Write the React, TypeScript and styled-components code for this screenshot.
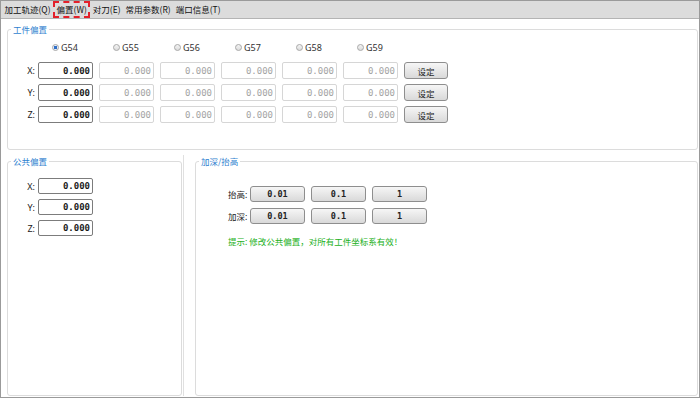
import React from 'react';
import styled, { createGlobalStyle } from 'styled-components';

const Global = createGlobalStyle`
  html, body { margin: 0; padding: 0; background: #fff; }
  body { font-family: "Noto Sans CJK SC", "Noto Sans", sans-serif; }
  * { box-sizing: border-box; }
`;

const Window = styled.div`
  width: 700px;
  height: 398px;
  border: 1px solid #9a9a9a;
  display: flex;
  flex-direction: column;
  background: #fff;
  overflow: hidden;
`;

const MenuBar = styled.div`
  height: 18px;
  flex: none;
  background: #dcdcdc;
  border-bottom: 1px solid #b4b4b4;
  display: flex;
  align-items: stretch;
  padding-left: 1px;
`;

const MenuItem = styled.div<{ $active?: boolean }>`
  display: flex;
  align-items: center;
  padding: 0 2.5px;
  font-size: 8.5px;
  color: #111;
  line-height: 1;
  white-space: nowrap;
  ${(p) => (p.$active ? 'outline: 2px dashed #e3202a; outline-offset: -2px; padding: 0 3.5px;' : '')}
`;

const Content = styled.div`
  flex: 1;
  display: flex;
  flex-direction: column;
  padding: 4px 1px 1px 6px;
  min-height: 0;
`;

const Group = styled.fieldset<{ $grow?: boolean }>`
  margin: 0;
  padding: 0;
  border: 1px solid #dcdcdc;
  border-radius: 3px;
  min-width: 0;
  ${(p) => (p.$grow ? 'flex: 1;' : '')}
`;

const Legend = styled.legend`
  margin-left: 3px;
  padding: 0 2px;
  font-size: 8.5px;
  color: #2f7fcf;
  line-height: 12px;
`;

const TopBody = styled.div`
  padding: 6px 0 26px 0;
  display: flex;
  flex-direction: column;
  gap: 5px;
`;

const RadioRow = styled.div`
  display: flex;
  padding-left: 44px;
  height: 12px;
  margin-bottom: 4px;
`;

const RadioItem = styled.div`
  width: 61px;
  display: flex;
  align-items: center;
  gap: 2px;
  font-family: "Noto Sans", sans-serif;
  font-size: 9px;
  color: #333;
`;

const RadioDot = styled.span<{ $checked?: boolean }>`
  width: 7px;
  height: 7px;
  border-radius: 50%;
  border: 1px solid #a8a8a8;
  background: ${(p) =>
    p.$checked
      ? 'radial-gradient(circle, #2f6fc8 0 1.6px, #e8eef8 2px)'
      : 'linear-gradient(#f4f4f4, #dcdcdc)'};
`;

const Row = styled.div<{ $h?: number }>`
  display: flex;
  align-items: center;
  height: ${(p) => p.$h ?? 17}px;
`;

const AxisLabel = styled.div<{ $w?: number }>`
  width: ${(p) => p.$w ?? 30}px;
  flex: none;
  text-align: right;
  padding-right: 3px;
  font-family: "Noto Sans", "Noto Sans CJK SC", sans-serif;
  font-size: 9px;
  color: #222;
`;

const Cells = styled.div`
  display: flex;
  gap: 6px;
  height: 100%;
`;

const NumBox = styled.div<{ $disabled?: boolean }>`
  width: 55px;
  height: 100%;
  border: 1px solid ${(p) => (p.$disabled ? '#d6d6d6' : '#7c7c7c')};
  border-radius: 2px;
  background: #fff;
  display: flex;
  align-items: center;
  justify-content: flex-end;
  padding-right: 2px;
  font-family: "DejaVu Sans Mono", monospace;
  font-size: 9px;
  color: ${(p) => (p.$disabled ? '#a4a4a4' : '#1a1a1a')};
  font-weight: ${(p) => (p.$disabled ? 400 : 600)};
`;

const Btn = styled.div<{ $w?: number }>`
  width: ${(p) => p.$w ?? 55}px;
  height: 100%;
  border: 1px solid #8e8e8e;
  border-radius: 3px;
  background: linear-gradient(#f6f6f6, #d9d9d9);
  display: flex;
  align-items: center;
  justify-content: center;
  font-family: "DejaVu Sans Mono", "Noto Sans CJK SC", monospace;
  font-size: 8.5px;
  font-weight: 600;
  color: #222;
`;

const SetBtn = styled(Btn)`
  margin-left: 6px;
  font-family: "Noto Sans CJK SC", sans-serif;
  font-weight: 400;
`;

const BottomRow = styled.div`
  flex: 1;
  display: flex;
  margin-top: 5px;
  min-height: 0;
`;

const LeftPane = styled.div`
  width: 175px;
  flex: none;
  display: flex;
  flex-direction: column;
`;

const Splitter = styled.div`
  width: 1px;
  flex: none;
  background: #e0e0e0;
  margin: 0 11px 0 1px;
`;

const RightPane = styled.div`
  flex: 1;
  display: flex;
  flex-direction: column;
  min-width: 0;
`;

const LeftBody = styled.div`
  padding-top: 11px;
  display: flex;
  flex-direction: column;
  gap: 5px;
`;

const RightBody = styled.div`
  padding: 19px 0 0 32px;
  display: flex;
  flex-direction: column;
  gap: 6px;
`;

const HintText = styled.div`
  margin-top: 5px;
  font-size: 8.5px;
  line-height: 12px;
  color: #22b022;
`;

const RowLabel = styled.div`
  width: 22px;
  flex: none;
  font-size: 8.5px;
  color: #222;
`;

const gCodes = ['G54', 'G55', 'G56', 'G57', 'G58', 'G59'];
const axes = ['X', 'Y', 'Z'];
const menus = ['加工轨迹(Q)', '偏置(W)', '对刀(E)', '常用参数(R)', '端口信息(T)'];

export default function App() {
  return (
    <>
      <Global />
      <Window>
        <MenuBar>
          {menus.map((m, i) => (
            <MenuItem key={m} $active={i === 1}>
              {m}
            </MenuItem>
          ))}
        </MenuBar>
        <Content>
          <Group>
            <Legend>工件偏置</Legend>
            <TopBody>
              <RadioRow>
                {gCodes.map((g, i) => (
                  <RadioItem key={g}>
                    <RadioDot $checked={i === 0} />
                    {g}
                  </RadioItem>
                ))}
              </RadioRow>
              {axes.map((a) => (
                <Row key={a}>
                  <AxisLabel>{a}:</AxisLabel>
                  <Cells>
                    {gCodes.map((g, i) => (
                      <NumBox key={g} $disabled={i > 0}>
                        0.000
                      </NumBox>
                    ))}
                  </Cells>
                  <SetBtn $w={44}>设定</SetBtn>
                </Row>
              ))}
            </TopBody>
          </Group>
          <BottomRow>
            <LeftPane>
              <Group $grow>
                <Legend>公共偏置</Legend>
                <LeftBody>
                  {axes.map((a) => (
                    <Row key={a} $h={16}>
                      <AxisLabel>{a}:</AxisLabel>
                      <NumBox>0.000</NumBox>
                    </Row>
                  ))}
                </LeftBody>
              </Group>
            </LeftPane>
            <Splitter />
            <RightPane>
              <Group $grow>
                <Legend>加深/抬高</Legend>
                <RightBody>
                  {['抬高:', '加深:'].map((l) => (
                    <Row key={l} $h={16}>
                      <RowLabel>{l}</RowLabel>
                      <Cells>
                        <Btn>0.01</Btn>
                        <Btn>0.1</Btn>
                        <Btn>1</Btn>
                      </Cells>
                    </Row>
                  ))}
                  <HintText>提示: 修改公共偏置，对所有工件坐标系有效！</HintText>
                </RightBody>
              </Group>
            </RightPane>
          </BottomRow>
        </Content>
      </Window>
    </>
  );
}
